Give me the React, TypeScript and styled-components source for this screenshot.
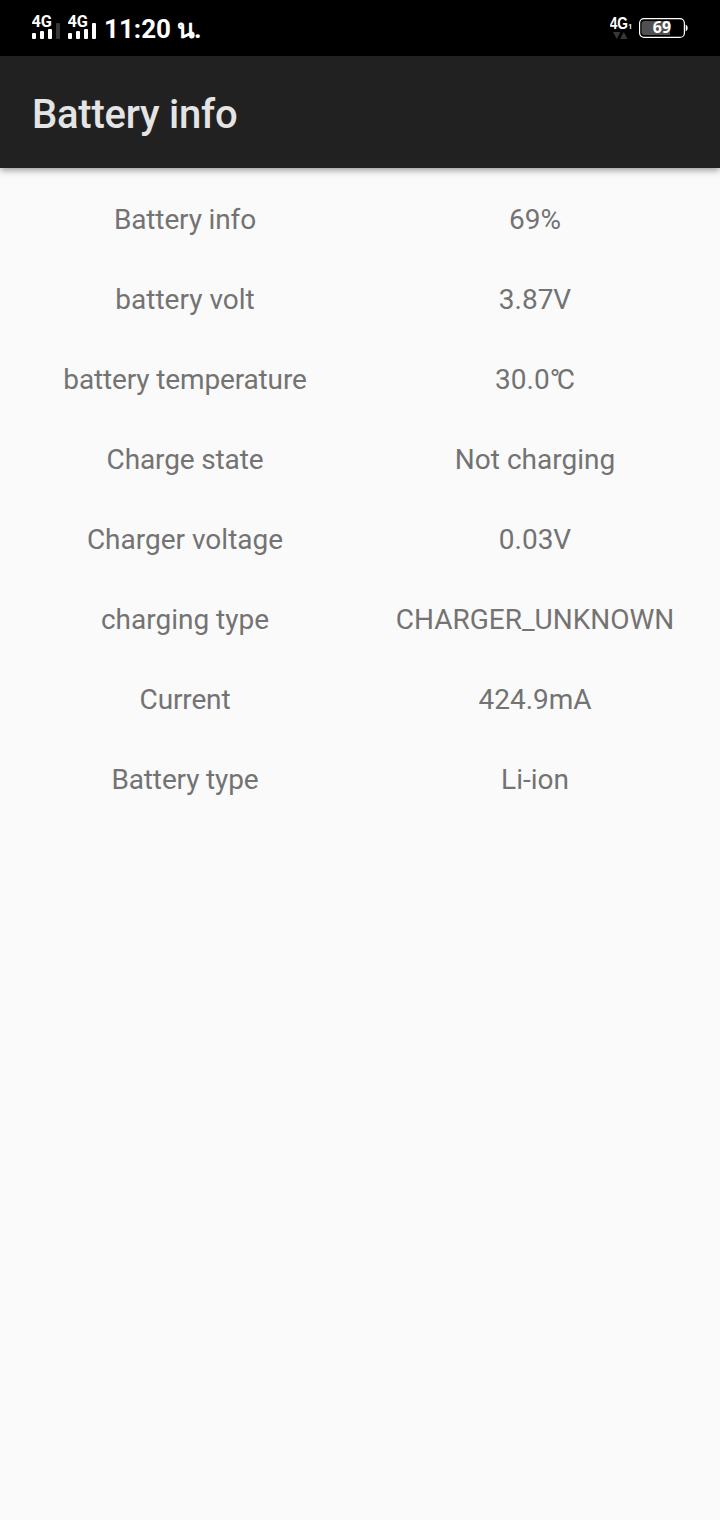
import React from 'react';
import styled, { createGlobalStyle } from 'styled-components';

const GlobalStyle = createGlobalStyle`
  * { box-sizing: border-box; }
  body {
    margin: 0;
    background: #fafafa;
    font-family: Roboto, "Noto Sans", sans-serif;
  }
`;

const Screen = styled.div`
  display: flex;
  flex-direction: column;
  min-height: 1520px;
  background: #fafafa;
`;

const StatusBar = styled.header`
  display: flex;
  justify-content: space-between;
  height: 56px;
  padding: 0 32px;
  background: #000;
  color: #fff;
`;

const StatusGroup = styled.div`
  display: flex;
  align-items: center;
`;

const StatusIcon = styled.svg<{ $gap?: number }>`
  display: block;
  flex: none;
  margin-right: ${({ $gap = 0 }) => $gap}px;
  font-family: Roboto, sans-serif;
`;

const Clock = styled.time`
  font-size: 26px;
  font-weight: 700;
  line-height: 56px;
  white-space: nowrap;
  padding-top: 2px;
`;

const ClockSuffix = styled.span`
  letter-spacing: -0.7px;
`;

const AppBar = styled.div`
  display: flex;
  align-items: center;
  height: 112px;
  padding: 6px 32px 0;
  background: #212121;
  box-shadow: 0 2px 7px rgba(0, 0, 0, 0.42);
`;

const Title = styled.h1`
  margin: 0;
  color: #e4e4e4;
  font-size: 40px;
  font-weight: 500;
  line-height: 48px;
  letter-spacing: -0.23px;
`;

const InfoList = styled.dl`
  margin: 0;
  padding: 12px 10px;
`;

const InfoRow = styled.div`
  display: grid;
  grid-template-columns: 1fr 1fr;
  align-items: center;
  height: 80px;
  color: #737373;
  font-size: 28px;
  line-height: 34px;
  text-align: center;
  white-space: nowrap;
`;

const Label = styled.dt<{ $tight: boolean }>`
  letter-spacing: ${({ $tight }) => ($tight ? '-0.14px' : 'normal')};
`;

const Value = styled.dd`
  margin: 0;
`;

const Degree = styled.span`
  letter-spacing: -3.5px;
`;

function Signal({ full, gap }: { full?: boolean; gap: number }) {
  return (
    <StatusIcon width="28" height="56" $gap={gap}>
      <text x="-0.5" y="27" fill="#fff" fontSize="16.5" fontWeight="700" textLength="20.5" lengthAdjust="spacingAndGlyphs">4G</text>
      <rect x="0" y="33" width="4" height="6" rx="1" fill="#fff" />
      <rect x="8" y="31" width="4" height="8" rx="1" fill="#fff" />
      <rect x="16" y="29" width="4" height="10" rx="1" fill="#fff" />
      <rect x="24" y="23" width="4" height="16" rx="1" fill={full ? '#fff' : '#363636'} />
    </StatusIcon>
  );
}

function DataNetwork() {
  return (
    <StatusIcon width="22" height="56" $gap={7}>
      <text x="-0.3" y="29" fill="#fff" fontFamily="Liberation Sans, sans-serif" fontSize="16.5" fontWeight="700" textLength="18.3" lengthAdjust="spacingAndGlyphs">4G</text>
      <text x="18.2" y="29" fill="#fff" fontFamily="Roboto, sans-serif" fontSize="8" fontWeight="700" textLength="4" lengthAdjust="spacingAndGlyphs">1</text>
      <path d="M3 32h7.5l-3.7 7zM10 39h7.5l-3.7-7z" fill="#383838" />
    </StatusIcon>
  );
}

function Battery() {
  return (
    <StatusIcon width="49" height="56">
      <path d="M5.5 21H31v14H5.5a3 3 0 0 1-3-3v-8a3 3 0 0 1 3-3z" fill="#505050" />
      <rect x="0.6" y="18.6" width="44.8" height="18.8" rx="4.5" fill="none" stroke="#fff" strokeWidth="1.2" />
      <path d="M46.7 24.5q2 .5 2 3.5t-2 3.5z" fill="#fff" />
      <text x="23" y="33.2" fill="#fff" fontFamily="Noto Sans, sans-serif" fontSize="16" fontWeight="700" textAnchor="middle">69</text>
    </StatusIcon>
  );
}

const readings = [
  { label: 'Battery info', value: '69%', tight: true },
  { label: 'battery volt', value: '3.87V', tight: false },
  { label: 'battery temperature', value: <>30.0<Degree>°</Degree>C</>, tight: true },
  { label: 'Charge state', value: 'Not charging', tight: true },
  { label: 'Charger voltage', value: '0.03V', tight: false },
  { label: 'charging type', value: 'CHARGER_UNKNOWN', tight: false },
  { label: 'Current', value: '424.9mA', tight: true },
  { label: 'Battery type', value: 'Li-ion', tight: true },
];

export default function App() {
  return (
    <Screen>
      <GlobalStyle />
      <StatusBar>
        <StatusGroup>
          <Signal gap={8} />
          <Signal full gap={8} />
          <Clock>11:20<ClockSuffix> น.</ClockSuffix></Clock>
        </StatusGroup>
        <StatusGroup>
          <DataNetwork />
          <Battery />
        </StatusGroup>
      </StatusBar>
      <AppBar>
        <Title>Battery info</Title>
      </AppBar>
      <InfoList>
        {readings.map(({ label, value, tight }) => (
          <InfoRow key={label}>
            <Label $tight={tight}>{label}</Label>
            <Value>{value}</Value>
          </InfoRow>
        ))}
      </InfoList>
    </Screen>
  );
}
